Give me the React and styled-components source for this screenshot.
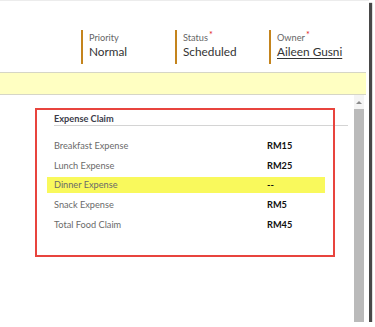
import styled, { createGlobalStyle } from "styled-components";

const GlobalStyle = createGlobalStyle`
  body {
    margin: 0;
    background: #fff;
    font-family: Lato, "Open Sans", sans-serif;
  }
`;

const Shot = styled.div`
  width: 369px;
  height: 322px;
  box-sizing: border-box;
  border-top: 1px solid #ececec;
  background: #fff;
  box-shadow: 3px 3px 1px rgba(40, 40, 40, 0.85);
  display: flex;
  flex-direction: column;
  overflow: hidden;
`;

const Header = styled.div`
  height: 71px;
  display: flex;
  align-items: flex-start;
  padding: 29px 0 0 81px;
  box-sizing: border-box;
`;

const Field = styled.div`
  width: 94px;
  height: 34px;
  box-sizing: border-box;
  border-left: 2px solid #c4841d;
  padding: 2px 0 4px 6px;
  white-space: nowrap;
`;

const FieldLabel = styled.div`
  font-size: 9.2px;
  line-height: 12px;
  color: #666;
`;

const Req = styled.span`
  color: #e02020;
  font-size: 9px;
  position: relative;
  top: -3px;
  margin-left: 1px;
`;

const FieldValue = styled.div`
  font-size: 11.8px;
  line-height: 16px;
  color: #333;
  text-decoration: ${(p) => (p.$link ? "underline" : "none")};
  text-underline-offset: 2px;
`;

const Banner = styled.div`
  height: 23px;
  margin-right: 3px;
  box-sizing: border-box;
  background: #ffffc2;
  border-top: 1px solid #d6d6c6;
  border-bottom: 1px solid #d6d6c6;
`;

const Body = styled.div`
  flex: 1;
  display: flex;
`;

const Content = styled.div`
  position: relative;
  flex: 1;
  padding: 17px 6px 0 47px;
`;

const Heading = styled.div`
  margin-left: 7px;
  font-size: 9.2px;
  font-weight: 700;
  line-height: 13px;
  color: #3c3c4a;
  border-bottom: 1px solid #d4d4d4;
`;

const Rows = styled.div`
  margin-top: 11.7px;
  width: 278px;
  display: flex;
  flex-direction: column;
  gap: 3.6px;
`;

const Row = styled.div`
  height: 16px;
  display: grid;
  grid-template-columns: 213px 1fr;
  align-items: center;
  padding-left: 7px;
  box-sizing: border-box;
  background: ${(p) => (p.$mark ? "#f9f95c" : "transparent")};
  font-size: 9.2px;
`;

const Label = styled.span`
  color: #6a6a6a;
`;

const Value = styled.span`
  color: #111;
  font-weight: 700;
`;

const RedBox = styled.div`
  position: absolute;
  left: 35px;
  top: 13px;
  width: 300px;
  height: 149px;
  box-sizing: border-box;
  border: 2px solid #e8443d;
`;

const Scrollbar = styled.div`
  width: 10px;
  margin-right: 5px;
  display: flex;
  flex-direction: column;
`;

const ArrowCell = styled.div`
  height: 14px;
  display: flex;
  align-items: center;
  justify-content: center;
  background: #f4f4f4;
`;

const Arrow = styled.div`
  width: 0;
  height: 0;
  border-left: 3px solid transparent;
  border-right: 3px solid transparent;
  border-bottom: 3px solid #8a8a8a;
`;

const Thumb = styled.div`
  flex: 1;
  background: #bababa;
`;

const fields = [
  { label: "Priority", value: "Normal" },
  { label: "Status", value: "Scheduled", req: true },
  { label: "Owner", value: "Aileen Gusni", req: true, link: true },
];

const expenses = [
  { label: "Breakfast Expense", value: "RM15" },
  { label: "Lunch Expense", value: "RM25" },
  { label: "Dinner Expense", value: "--", mark: true },
  { label: "Snack Expense", value: "RM5" },
  { label: "Total Food Claim", value: "RM45" },
];

export default function App() {
  return (
    <>
      <GlobalStyle />
      <Shot>
        <Header>
          {fields.map((f) => (
            <Field key={f.label}>
              <FieldLabel>
                {f.label}
                {f.req && <Req>*</Req>}
              </FieldLabel>
              <FieldValue $link={f.link}>{f.value}</FieldValue>
            </Field>
          ))}
        </Header>
        <Banner />
        <Body>
          <Content>
            <Heading>Expense Claim</Heading>
            <Rows>
              {expenses.map((e) => (
                <Row key={e.label} $mark={e.mark}>
                  <Label>{e.label}</Label>
                  <Value>{e.value}</Value>
                </Row>
              ))}
            </Rows>
            <RedBox />
          </Content>
          <Scrollbar>
            <ArrowCell>
              <Arrow />
            </ArrowCell>
            <Thumb />
          </Scrollbar>
        </Body>
      </Shot>
    </>
  );
}
